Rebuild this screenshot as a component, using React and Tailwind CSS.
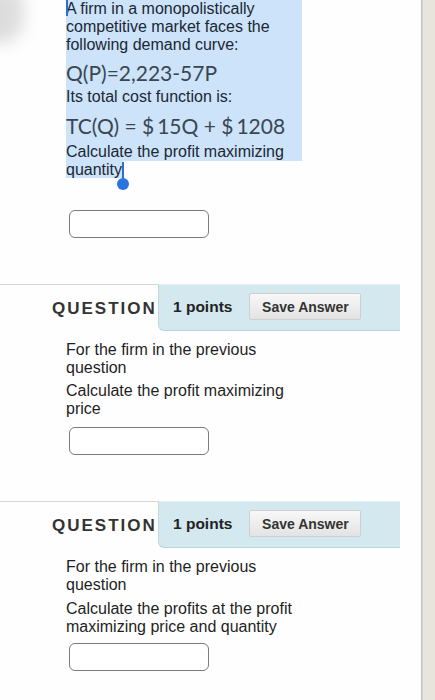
import React from "react";

const sans = { fontFamily: '"Liberation Sans", Arial, sans-serif' };
const math = { fontFamily: 'Lato, "Open Sans", sans-serif' };

function Header() {
  return (
    <div className="flex h-[47px]" style={sans}>
      <div className="w-[158px] border-t border-[#d6d6d6] flex items-start pt-[11px] pl-[52px]">
        <span className="text-[17px] font-bold tracking-[2px] text-[#333]">QUESTION</span>
      </div>
      <div className="w-[242px] bg-[#d3e8ef] border-t border-[#e3eff3] border-l border-l-[#c2d9e1] border-b border-b-[#bcd4dc] rounded-bl-[6px] flex items-center pl-[14px]">
        <span className="text-[15.5px] font-bold text-[#222] -mt-[2px]">1 points</span>
        <button className="ml-[17px] w-[112px] h-[27px] -mt-[2px] rounded-[2px] border border-[#cfcfcf] bg-gradient-to-b from-[#f8f8f8] to-[#e3e3e3] text-[14px] font-bold text-[#333] leading-none">
          Save Answer
        </button>
      </div>
    </div>
  );
}

function Input() {
  return (
    <div className="ml-[3px] w-[140px] h-[28px] rounded-[6px] border-[1.5px] border-[#7b7b7b] bg-white" />
  );
}

export default function App() {
  return (
    <div className="relative w-[435px] h-[700px] overflow-hidden flex bg-white">
      <div className="w-[422px] h-full border-r border-[#c4c4c4] bg-[#fefefe]">
        {/* Block 1 */}
        <div className="pl-[66px]" style={sans}>
          <div className="relative w-[236px] bg-[#cce3fa] text-[16px] leading-[18px] text-[#1b2733]">
            <div className="absolute left-0 top-[0px] w-[2px] h-[16px] bg-[#2f6ed6]" />
            <div>A firm in a monopolistically</div>
            <div>competitive market faces the</div>
            <div>following demand curve:</div>
            <div className="h-[34px] pt-[3px] text-[21px] leading-[31px] text-[#3a4651]" style={math}>
              Q(P)=2,223-57P
            </div>
            <div>Its total cost function is:</div>
            <div className="h-[37px] pt-[4px] text-[21px] leading-[31px] text-[#3a4651]" style={math}>
              TC(Q) = $<span className="ml-[3px]">15Q</span> + $<span className="ml-[3px]">1208</span>
            </div>
            <div className="h-[18px]">Calculate the profit maximizing</div>
          </div>
          <div className="relative text-[16px] leading-[18px] text-[#1b2733]">
            <span className="bg-[#cce3fa] pr-[1px]">quantity</span>
            <div className="absolute left-[56px] top-[1px] w-[2px] h-[20px] bg-[#2f6ed6]" />
            <div className="absolute left-[51px] top-[17px] w-[12px] h-[12px] rounded-full bg-[#2b74e0]" />
          </div>
          <div className="h-[31px]" />
          <Input />
        </div>

        <div className="h-[46px]" />
        <Header />

        {/* Block 2 */}
        <div className="pl-[66px] pt-[10px] text-[16px] leading-[18px] text-[#1f1f1f]" style={sans}>
          <div>For the firm in the previous</div>
          <div>question</div>
          <div className="mt-[5px]">Calculate the profit maximizing</div>
          <div>price</div>
          <div className="h-[9px]" />
          <Input />
        </div>

        <div className="h-[46px]" />
        <Header />

        {/* Block 3 */}
        <div className="pl-[66px] pt-[10px] text-[16px] leading-[18px] text-[#1f1f1f]" style={sans}>
          <div>For the firm in the previous</div>
          <div>question</div>
          <div className="mt-[6px]">Calculate the profits at the profit</div>
          <div>maximizing price and quantity</div>
          <div className="h-[7px]" />
          <Input />
        </div>
      </div>
      <div className="flex-1 h-full bg-[#e7e5dc] border-l border-[#d4d2ca]" />
      <div className="absolute -left-[28px] -top-[18px] w-[52px] h-[62px] rounded-full bg-[#cfcfcf] blur-[8px] opacity-70" />
    </div>
  );
}
